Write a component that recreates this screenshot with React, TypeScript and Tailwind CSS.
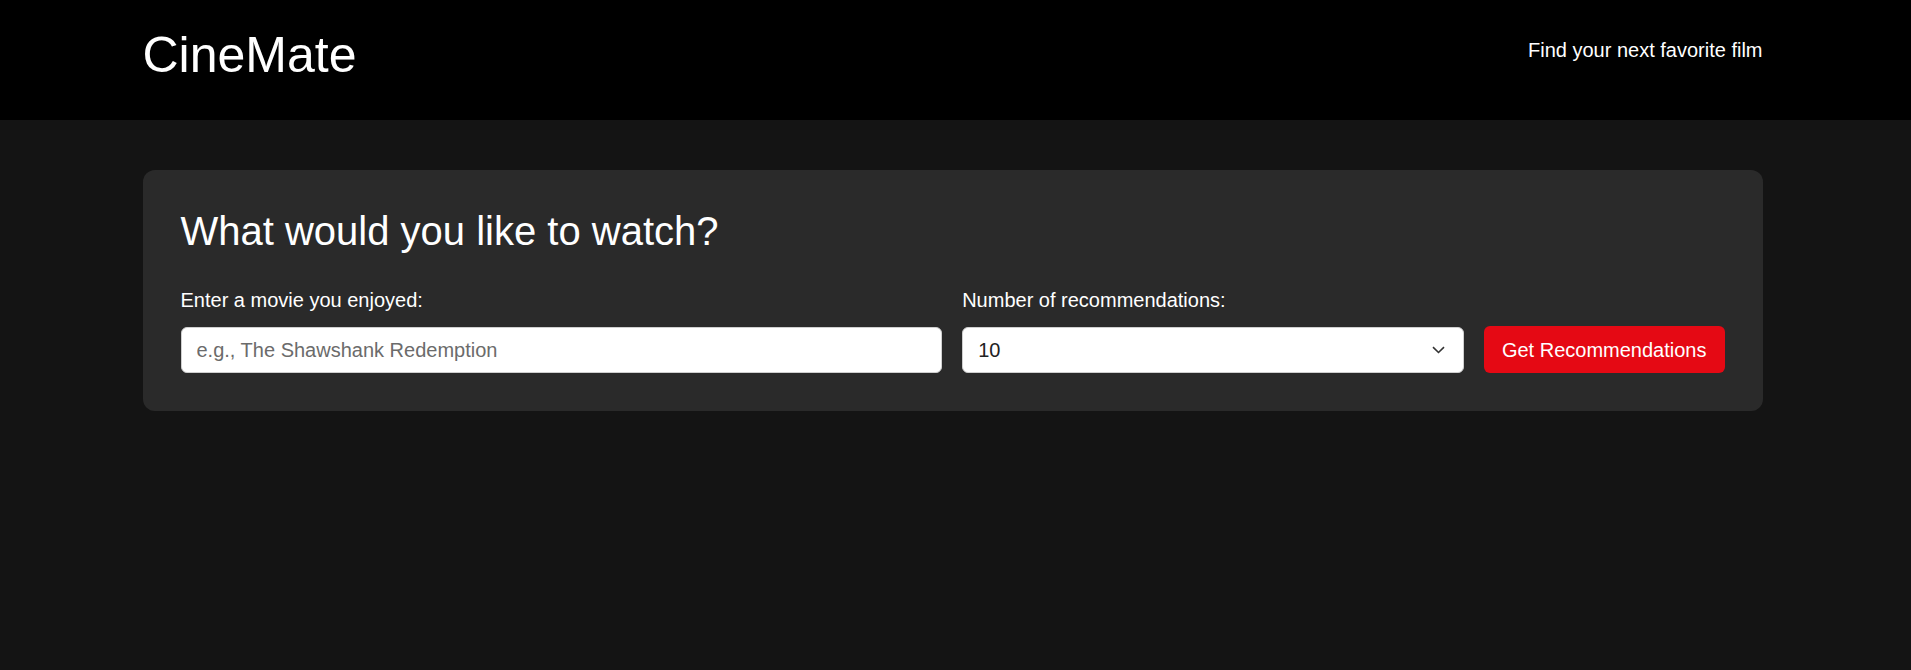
function ChevronDown() {
    return (
        <svg width="13" height="8" viewBox="0 0 13 8" fill="none" className="pointer-events-none absolute right-[19px] top-1/2 -translate-y-1/2">
            <path d="M1 1.2L6.5 6.5L12 1.2" stroke="#333" strokeWidth="1.6" />
        </svg>
    );
}

function Header() {
    return (
        <header className="bg-black h-[120px] pr-[6px]">
            <div className="w-[1620px] mx-auto flex justify-between items-start">
                <h1 className="text-[50px] leading-[56px] mt-[27px] text-white font-normal">CineMate</h1>
                <span className="text-[20px] leading-[23px] mt-[39px] text-white">Find your next favorite film</span>
            </div>
        </header>
    );
}

function SearchCard() {
    return (
        <main className="pr-[6px] pt-[50px]">
            <section className="w-[1620px] mx-auto bg-[#2a2a2a] rounded-[12px] p-[38px]">
                <h2 className="text-[40px] leading-[46px] text-white font-normal mb-[35px]">What would you like to watch?</h2>
                <div className="grid grid-cols-[762fr_502fr_auto] gap-x-[20px] items-end">
                    <div className="flex flex-col">
                        <label className="text-[20px] leading-[23px] text-white mb-[15px]">Enter a movie you enjoyed:</label>
                        <input
                            type="text"
                            placeholder="e.g., The Shawshank Redemption"
                            className="h-[46px] bg-white border border-[#cfcfcf] rounded-[6px] px-[15px] text-[20px] text-[#222] placeholder:text-[#6b6b6b] outline-none"
                        />
                    </div>
                    <div className="flex flex-col">
                        <label className="text-[20px] leading-[23px] text-white mb-[15px]">Number of recommendations:</label>
                        <div className="relative">
                            <select
                                defaultValue="10"
                                className="appearance-none w-full h-[46px] bg-white border border-[#cfcfcf] rounded-[6px] px-[15px] text-[20px] text-[#222] outline-none"
                            >
                                <option value="5">5</option>
                                <option value="10">10</option>
                                <option value="15">15</option>
                                <option value="20">20</option>
                            </select>
                            <ChevronDown />
                        </div>
                    </div>
                    <button className="h-[47px] bg-[#e50914] text-white text-[20px] rounded-[6px] px-[18px]">
                        Get Recommendations
                    </button>
                </div>
            </section>
        </main>
    );
}

export default function App() {
    return (
        <div className="min-h-screen bg-[#141414] font-['Liberation_Sans',Arial,sans-serif]">
            <Header />
            <SearchCard />
        </div>
    );
}
